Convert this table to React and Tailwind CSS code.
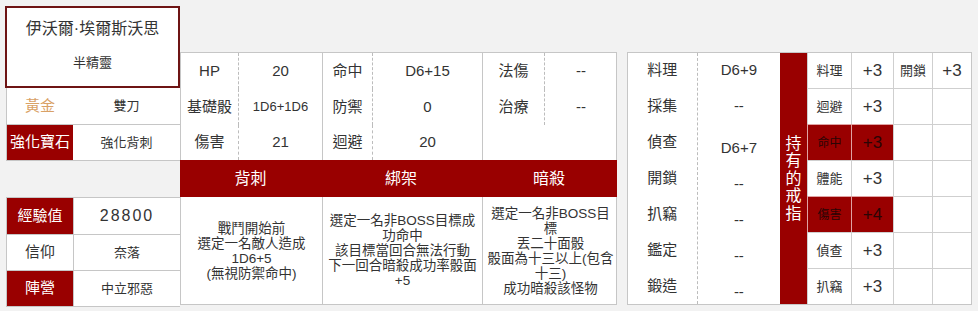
import React from "react";

const stats = [
  ["HP", "20", "命中", "D6+15", "法傷", "--"],
  ["基礎骰", "1D6+1D6", "防禦", "0", "治療", "--"],
  ["傷害", "21", "迴避", "20"],
];

const colLine = [
  "",
  "border-l border-dashed border-[#bcbcbc]",
  "border-l border-solid border-[#c6c6c6]",
  "border-l border-dashed border-[#bcbcbc]",
  "border-l border-solid border-[#c6c6c6]",
  "border-l border-dashed border-[#bcbcbc]",
];

const skills = [
  { name: "背刺", lines: ["戰鬥開始前", "選定一名敵人造成", "1D6+5", "(無視防禦命中)"] },
  {
    name: "綁架",
    lines: ["選定一名非BOSS目標成", "功命中", "該目標當回合無法行動", "下一回合暗殺成功率骰面", "+5"],
  },
  {
    name: "暗殺",
    lines: ["選定一名非BOSS目", "標", "丟二十面骰", "骰面為十三以上(包含", "十三)", "成功暗殺該怪物"],
  },
];

const lifeSkills = [
  ["料理", "D6+9"],
  ["採集", "--"],
  ["偵查", "D6+7"],
  ["開鎖", "--"],
  ["扒竊", "--"],
  ["鑑定", "--"],
  ["鍛造", "--"],
];

const rings = [
  { a: "料理", b: "+3", c: "開鎖", d: "+3" },
  { a: "迴避", b: "+3" },
  { a: "命中", b: "+3", hot: true },
  { a: "體能", b: "+3" },
  { a: "傷害", b: "+4", hot: true },
  { a: "偵查", b: "+3" },
  { a: "扒竊", b: "+3" },
];

function InfoRow({ label, value, labelClass, valueClass = "text-[13px]", first }) {
  return (
    <div className={`flex h-9 ${first ? "" : "border-t border-[#c6c6c6]"}`}>
      <div className={`w-[66px] flex items-center justify-center text-[15px] ${labelClass}`}>{label}</div>
      <div className={`flex-1 flex items-center justify-center bg-white ${valueClass}`}>{value}</div>
    </div>
  );
}

export default function App() {
  return (
    <div className="w-[978px] h-[311px] bg-[#f2f2f2] text-[#333] font-['Liberation_Sans','Noto_Sans_CJK_TC',sans-serif] flex pl-[5px] pt-[6px]">
      {/* left column: name card + basic info */}
      <div className="w-[175px] flex flex-col">
        <div className="h-[82px] border-2 border-[#6e1414] bg-white flex flex-col items-center pt-[11px]">
          <div className="text-[16px] leading-5">伊沃爾·埃爾斯沃思</div>
          <div className="text-[13px] leading-[18px] mt-[15px]">半精靈</div>
        </div>
        <div className="ml-[1px] border-l border-b border-[#c6c6c6] bg-white">
          <InfoRow first label="黃金" value="雙刀" labelClass="text-[#d9a166]" />
          <InfoRow label="強化寶石" value="強化背刺" labelClass="bg-[#990000] text-white" />
        </div>
        <div className="h-[36px]" />
        <div className="ml-[1px] border border-r-0 border-[#c6c6c6] bg-white">
          <InfoRow
            first
            label="經驗值"
            value="28800"
            labelClass="bg-[#990000] text-white"
            valueClass="text-[16px] tracking-[2px] border-l border-[#c6c6c6]"
          />
          <InfoRow label="信仰" value="奈落" labelClass="bg-white" valueClass="text-[13px] border-l border-[#c6c6c6]" />
          <InfoRow
            label="陣營"
            value="中立邪惡"
            labelClass="bg-[#990000] text-white"
            valueClass="text-[13px] border-l border-[#c6c6c6]"
          />
        </div>
      </div>

      {/* middle: stats + skills */}
      <div className="w-[437px] flex flex-col mt-[46px]">
        <div className="grid grid-cols-[57px_84px_50px_110px_62px_73px] border border-[#c6c6c6] border-b-0 bg-white">
          {stats.map((row, r) => (
            <React.Fragment key={r}>
              {row.map((cell, c) => (
                <div
                  key={c}
                  className={`${r === 2 ? "h-[35px]" : "h-9"} flex items-center justify-center ${
                    cell === "1D6+1D6" ? "text-[13px]" : "text-[15px]"
                  } ${colLine[c]}`}
                >
                  {cell}
                </div>
              ))}
              {row.length === 4 && <div className="col-span-2 border-l border-[#c6c6c6]" />}
            </React.Fragment>
          ))}
        </div>
        <div className="grid grid-cols-[141px_160px_136px] bg-[#990000] h-[37px] text-white text-[16px]">
          {skills.map((s) => (
            <div key={s.name} className="flex items-center justify-center">
              {s.name}
            </div>
          ))}
        </div>
        <div className="grid grid-cols-[141px_160px_136px] h-[108px] bg-white border border-t-0 border-[#c6c6c6]">
          {skills.map((s, i) => (
            <div
              key={s.name}
              className={`flex flex-col items-center justify-center text-[13.5px] leading-[15px] ${
                i > 0 ? "border-l border-[#c6c6c6]" : ""
              }`}
            >
              {s.lines.map((l, j) => (
                <div key={j} className="whitespace-nowrap">
                  {l}
                </div>
              ))}
            </div>
          ))}
        </div>
      </div>

      {/* right: life skills + rings */}
      <div className="ml-[10px] mt-[46px] w-[345px] self-start flex border border-[#c6c6c6] bg-white">
        <div className="w-[69px] flex flex-col">
          {lifeSkills.map(([n], i) => (
            <div key={n} className={`${i === 0 ? "h-[35px]" : "h-9"} flex items-center justify-center text-[15px]`}>
              {n}
            </div>
          ))}
        </div>
        <div className="w-[84px] flex flex-col border-l border-dashed border-[#bcbcbc]">
          {lifeSkills.map(([n, v], i) => (
            <div
              key={n}
              className={`${i === 0 ? "h-[35px]" : "h-9"} ${i >= 2 ? "pt-3" : ""} flex items-center justify-center text-[15px]`}
            >
              {v}
            </div>
          ))}
        </div>
        <div className="w-[27px] bg-[#990000] flex flex-col items-center justify-center text-white text-[16px] leading-[17.5px]">
          {"持有的戒指".split("").map((ch) => (
            <span key={ch}>{ch}</span>
          ))}
        </div>
        <div className="w-[164px] grid grid-cols-[44px_42px_39px_39px]">
          {rings.map((r, i) => {
            const h = i === 0 ? "h-[35px]" : "h-9 border-t";
            const hot = r.hot ? "bg-[#990000] text-[#2a0505] border-[#e0a3a3]" : "border-[#cfcfcf]";
            return (
              <React.Fragment key={i}>
                <div className={`${h} border-l ${hot} flex items-center justify-center ${r.hot ? "text-[12px]" : "text-[13px]"}`}>
                  {r.a}
                </div>
                <div className={`${h} border-l ${hot} flex items-center justify-center text-[17px]`}>{r.b}</div>
                <div className={`${h} border-l border-[#cfcfcf] flex items-center justify-center text-[13px]`}>
                  {r.c || ""}
                </div>
                <div className={`${h} border-l border-[#cfcfcf] flex items-center justify-center text-[17px]`}>
                  {r.d || ""}
                </div>
              </React.Fragment>
            );
          })}
        </div>
      </div>
    </div>
  );
}
